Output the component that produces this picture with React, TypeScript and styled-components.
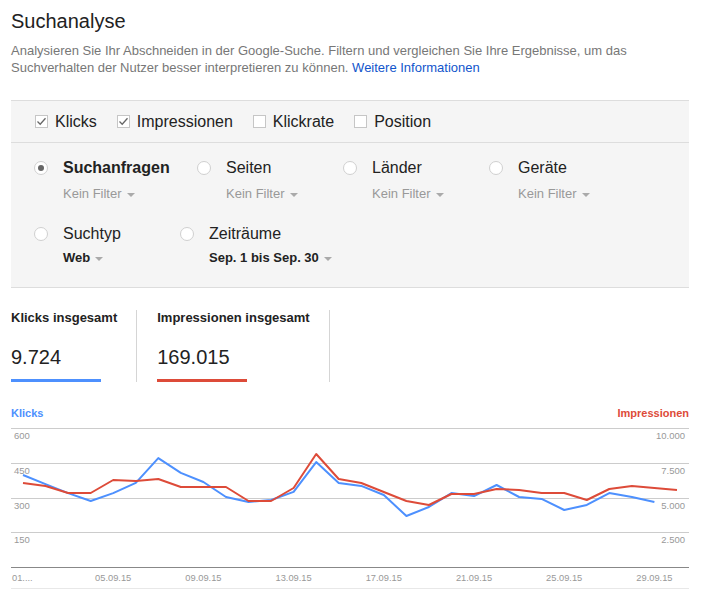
import styled, { createGlobalStyle } from 'styled-components';

const GlobalStyle = createGlobalStyle`
  body {
    margin: 0;
    background: #fff;
    font-family: 'Liberation Sans', Arial, sans-serif;
    color: #222;
  }
`;

const BLUE = '#4d90fe';
const RED = '#dd4b39';

// daily values, 1.-30.09.15
const clicks = [
  397, 358, 319, 285, 319, 363, 470, 406, 367, 302, 281, 289, 324, 453, 363,
  350, 311, 220, 259, 319, 306, 354, 302, 294, 246, 268, 319, 302, 281,
];
const impressions = [
  6043, 5827, 5324, 5324, 6259, 6187, 6331, 5755, 5755, 5755, 4748, 4748,
  5683, 8129, 6331, 6043, 5396, 4748, 4460, 5252, 5252, 5611, 5539, 5324,
  5324, 4820, 5611, 5827, 5683, 5539,
];

const Page = styled.div`
  width: 678px;
  padding: 9px 0 0 11px;
`;

const Title = styled.h1`
  margin: 0;
  font-size: 20px;
  font-weight: normal;
  line-height: 24px;
  color: #222;
`;

const Intro = styled.p`
  margin: 9px 0 0;
  font-size: 13px;
  line-height: 17px;
  color: #777;

  a {
    color: #1155cc;
    text-decoration: none;
  }
`;

const Panel = styled.div`
  margin-top: 24px;
  background: #f5f5f5;
  border-top: 1px solid #ddd;
  border-bottom: 1px solid #ddd;
`;

const MetricRow = styled.div`
  display: flex;
  align-items: center;
  gap: 20px;
  height: 41px;
  padding-left: 24px;
  border-bottom: 1px solid #ddd;
`;

const Metric = styled.label`
  display: flex;
  align-items: center;
  gap: 7px;
  font-size: 16px;
  line-height: 20px;
  color: #222;
`;

const Box = styled.span`
  display: flex;
  align-items: center;
  justify-content: center;
  width: 13px;
  height: 13px;
  box-sizing: border-box;
  background: #fff;
  border: 1px solid #c6c6c6;
`;

const Dimensions = styled.div`
  display: flex;
  flex-direction: column;
  gap: 22px;
  padding: 15px 0 21px 23px;
`;

const DimRow = styled.div`
  display: flex;
`;

const Dim = styled.div<{ $width?: number }>`
  display: flex;
  gap: 15px;
  width: ${p => (p.$width ? `${p.$width}px` : 'auto')};
`;

const Radio = styled.span<{ $on?: boolean }>`
  display: flex;
  align-items: center;
  justify-content: center;
  flex: none;
  width: 14px;
  height: 14px;
  margin-top: 3px;
  box-sizing: border-box;
  border-radius: 50%;
  background: #fff;
  border: 1px solid #d0d0d0;

  &::after {
    content: '';
    display: ${p => (p.$on ? 'block' : 'none')};
    width: 6px;
    height: 6px;
    border-radius: 50%;
    background: #666;
  }
`;

const DimName = styled.div<{ $on?: boolean }>`
  font-size: 16px;
  line-height: 20px;
  font-weight: ${p => (p.$on ? 'bold' : 'normal')};
  color: #222;
`;

const DimFilter = styled.div<{ $strong?: boolean }>`
  display: flex;
  align-items: center;
  margin-top: ${p => (p.$strong ? 6 : 8)}px;
  font-size: 13px;
  line-height: 16px;
  font-weight: ${p => (p.$strong ? 'bold' : 'normal')};
  color: ${p => (p.$strong ? '#222' : '#999')};
`;

const Caret = styled.span`
  width: 0;
  height: 0;
  margin: 1px 0 0 5px;
  border-left: 4px solid transparent;
  border-right: 4px solid transparent;
  border-top: 4px solid #aaa;
`;

const Stats = styled.div`
  display: flex;
  margin-top: 22px;
`;

const Stat = styled.div<{ $first?: boolean }>`
  padding: 0 19px 0 ${p => (p.$first ? 0 : 20)}px;
  border-right: 1px solid #d5d5d5;
`;

const StatLabel = styled.div`
  font-size: 13px;
  line-height: 16px;
  font-weight: bold;
  color: #222;
`;

const StatValue = styled.div`
  margin-top: 19px;
  font-size: 20px;
  line-height: 24px;
  color: #222;
`;

const StatBar = styled.div<{ $color: string }>`
  width: 90px;
  height: 3px;
  margin-top: 10px;
  background: ${p => p.$color};
`;

const SeriesHead = styled.div`
  display: flex;
  justify-content: space-between;
  margin-top: 24px;
  font-size: 11px;
  line-height: 14px;
  font-weight: bold;
`;

const SeriesName = styled.span<{ $color: string }>`
  color: ${p => p.$color};
`;

const ChartSvg = styled.svg`
  display: block;
  font-family: 'Liberation Sans', Arial, sans-serif;
`;

const Check = () => (
  <svg width="11" height="11" viewBox="0 0 11 11">
    <path d="M1.5 5.5 L4.2 8.2 L9.5 2.2" fill="none" stroke="#666" strokeWidth="1.3" />
  </svg>
);

const MetricBox = ({ label, on }: { label: string; on?: boolean }) => (
  <Metric>
    <Box>{on && <Check />}</Box>
    {label}
  </Metric>
);

const DimItem = ({
  name,
  filter,
  width,
  on,
  strong,
}: {
  name: string;
  filter: string;
  width?: number;
  on?: boolean;
  strong?: boolean;
}) => (
  <Dim $width={width}>
    <Radio $on={on} />
    <div>
      <DimName $on={on}>{name}</DimName>
      <DimFilter $strong={strong}>
        {filter}
        <Caret />
      </DimFilter>
    </div>
  </Dim>
);

const W = 678;
const H = 170;
const BASE = 147;
const SPAN = 139;
const gridY = [8, 43, 78, 112];
const leftTicks = ['600', '450', '300', '150'];
const rightTicks = ['10.000', '7.500', '5.000', '2.500'];
const dayX = (d: number) => 12 + (d - 1) * 22.55;
const xTicks = [5, 9, 13, 17, 21, 25, 29];

const toPoints = (data: number[], max: number) =>
  data.map((v, i) => `${dayX(i + 1).toFixed(1)},${(BASE - (v * SPAN) / max).toFixed(1)}`).join(' ');

const Chart = () => (
  <ChartSvg width={W} height={H} viewBox={`0 0 ${W} ${H}`}>
    {gridY.map((y, i) => (
      <g key={y}>
        <line x1="0" x2={W} y1={y + 0.5} y2={y + 0.5} stroke="#ccc" />
        <text x="3" y={y + 10.5} fontSize="9.5" fill="#999">
          {leftTicks[i]}
        </text>
        <text x="674" y={y + 10.5} fontSize="9.5" fill="#999" textAnchor="end">
          {rightTicks[i]}
        </text>
      </g>
    ))}
    <line x1="0" x2={W} y1={BASE + 0.5} y2={BASE + 0.5} stroke="#888" />
    <line x1="0" x2={W} y1="168.5" y2="168.5" stroke="#e8e8e8" />
    <text x="1" y="161" fontSize="9.3" fill="#999">
      01....
    </text>
    {xTicks.map(d => (
      <text key={d} x={dayX(d)} y="161" fontSize="9.3" fill="#999" textAnchor="middle">
        {String(d).padStart(2, '0')}.09.15
      </text>
    ))}
    <polyline points={toPoints(clicks, 600)} fill="none" stroke={BLUE} strokeWidth="2" strokeLinejoin="round" />
    <polyline points={toPoints(impressions, 10000)} fill="none" stroke={RED} strokeWidth="2" strokeLinejoin="round" />
  </ChartSvg>
);

const App = () => (
  <>
    <GlobalStyle />
    <Page>
      <Title>Suchanalyse</Title>
      <Intro>
        Analysieren Sie Ihr Abschneiden in der Google-Suche. Filtern und vergleichen Sie Ihre
        Ergebnisse, um das Suchverhalten der Nutzer besser interpretieren zu können.{' '}
        <a href="#">Weitere Informationen</a>
      </Intro>

      <Panel>
        <MetricRow>
          <MetricBox label="Klicks" on />
          <MetricBox label="Impressionen" on />
          <MetricBox label="Klickrate" />
          <MetricBox label="Position" />
        </MetricRow>
        <Dimensions>
          <DimRow>
            <DimItem name="Suchanfragen" filter="Kein Filter" width={163} on />
            <DimItem name="Seiten" filter="Kein Filter" width={146} />
            <DimItem name="Länder" filter="Kein Filter" width={146} />
            <DimItem name="Geräte" filter="Kein Filter" />
          </DimRow>
          <DimRow>
            <DimItem name="Suchtyp" filter="Web" width={146} strong />
            <DimItem name="Zeiträume" filter="Sep. 1 bis Sep. 30" strong />
          </DimRow>
        </Dimensions>
      </Panel>

      <Stats>
        <Stat $first>
          <StatLabel>Klicks insgesamt</StatLabel>
          <StatValue>9.724</StatValue>
          <StatBar $color={BLUE} />
        </Stat>
        <Stat>
          <StatLabel>Impressionen insgesamt</StatLabel>
          <StatValue>169.015</StatValue>
          <StatBar $color={RED} />
        </Stat>
      </Stats>

      <SeriesHead>
        <SeriesName $color={BLUE}>Klicks</SeriesName>
        <SeriesName $color={RED}>Impressionen</SeriesName>
      </SeriesHead>
      <Chart />
    </Page>
  </>
);

export default App;
